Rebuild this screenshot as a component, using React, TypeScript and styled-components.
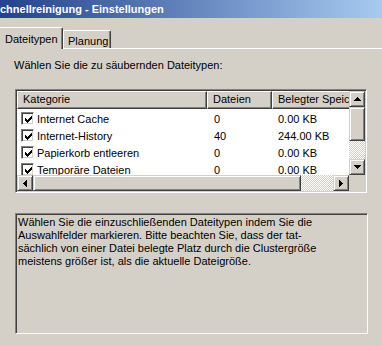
import styled, { createGlobalStyle } from 'styled-components';

const GlobalStyle = createGlobalStyle`
  html, body {
    margin: 0;
    padding: 0;
    background: #d4d0c8;
  }
  body {
    font-family: "Liberation Sans", Arial, sans-serif;
    font-size: 11px;
    color: #000;
  }
  * {
    box-sizing: border-box;
  }
`;

const Window = styled.div`
  width: 382px;
  height: 346px;
  overflow: hidden;
  display: flex;
  flex-direction: column;
  background: #d4d0c8;
`;

const TitleBar = styled.div`
  height: 18px;
  flex: none;
  background: linear-gradient(to right, #23418c, #a6caf0);
  color: #fff;
  font-weight: bold;
  font-size: 11px;
  line-height: 19px;
  white-space: nowrap;
`;

const TabStrip = styled.div`
  display: flex;
  align-items: flex-end;
  height: 21px;
  margin-top: 9px;
  margin-left: -1px;
  position: relative;
  z-index: 1;
  flex: none;
`;

const Tab = styled.div<{ $active?: boolean; $width: number }>`
  width: ${({ $width }) => $width}px;
  height: ${({ $active }) => ($active ? 22 : 18)}px;
  margin-bottom: ${({ $active }) => ($active ? -1 : 0)}px;
  padding: ${({ $active }) => ($active ? '0 0 0 5px' : '2px 0 0 4px')};
  display: flex;
  align-items: center;
  background: #d4d0c8;
  border-top: 1px solid #fff;
  border-left: 1px solid #fff;
  border-right: 1px solid #404040;
  border-radius: 2px 2px 0 0;
  box-shadow: inset -1px 0 #808080;
  white-space: nowrap;
`;

const Panel = styled.div`
  flex: 1;
  border-top: 1px solid #fff;
  padding: 10px 0 0 14px;
  display: flex;
  flex-direction: column;
`;

const Intro = styled.div`
  line-height: 13px;
  white-space: nowrap;
`;

const ListView = styled.div`
  margin: 17px 0 0 1px;
  width: 352px;
  height: 104px;
  border: 1px solid;
  border-color: #808080 #fff #fff #808080;
  box-shadow: inset 1px 1px #404040, inset -1px -1px #d4d0c8;
  padding: 1px;
  display: grid;
  grid-template-columns: 332px 16px;
  grid-template-rows: 84px 16px;
`;

const ListContent = styled.div`
  background: #fff;
  overflow: hidden;
`;

const HeaderRow = styled.div`
  display: flex;
  height: 18px;
`;

const HeaderCell = styled.div<{ $width: number }>`
  width: ${({ $width }) => $width}px;
  flex: none;
  height: 18px;
  padding-left: 5px;
  background: #d4d0c8;
  border-top: 1px solid #fff;
  border-left: 1px solid #fff;
  border-right: 1px solid #404040;
  border-bottom: 1px solid #404040;
  box-shadow: inset -1px -1px #808080;
  line-height: 15px;
  white-space: nowrap;
  overflow: hidden;
`;

const Rows = styled.div`
  padding-top: 1px;
`;

const Row = styled.div`
  display: flex;
  height: 17px;
  align-items: center;
`;

const Cell = styled.div<{ $width: number; $pad: number }>`
  width: ${({ $width }) => $width}px;
  flex: none;
  padding-left: ${({ $pad }) => $pad}px;
  display: flex;
  align-items: center;
  gap: 3px;
  white-space: nowrap;
`;

const CheckBox = styled.div`
  width: 13px;
  height: 13px;
  flex: none;
  background: #fff;
  border: 1px solid;
  border-color: #808080 #fff #fff #808080;
  box-shadow: inset 1px 1px #404040, inset -1px -1px #d4d0c8;
  padding: 3px 0 0 3px;
  display: flex;
`;

const VScroll = styled.div`
  display: flex;
  flex-direction: column;
`;

const HScroll = styled.div`
  display: flex;
`;

const Track = styled.div`
  flex: 1;
  background: repeating-conic-gradient(#d4d0c8 0 25%, #fff 0 50%) 0 0 / 2px 2px;
`;

const Raised = styled.div<{ $size?: number; $horizontal?: boolean }>`
  flex: none;
  width: ${({ $size, $horizontal }) => ($horizontal && $size ? `${$size}px` : '16px')};
  height: ${({ $size, $horizontal }) => (!$horizontal && $size ? `${$size}px` : '16px')};
  background: #d4d0c8;
  border: 1px solid;
  border-color: #d4d0c8 #404040 #404040 #d4d0c8;
  box-shadow: inset 1px 1px #fff, inset -1px -1px #808080;
  display: flex;
  align-items: center;
  justify-content: center;
`;

const Corner = styled.div`
  background: #d4d0c8;
`;

const Description = styled.div`
  margin: 20px 0 0 1px;
  width: 353px;
  height: 121px;
  border: 1px solid;
  border-color: #808080 #fff #fff #808080;
  box-shadow: inset 1px 1px #404040, inset -1px -1px #d4d0c8;
  padding: 2px 0 0 2px;
  line-height: 13px;
  white-space: nowrap;
`;

const Check = () => (
  <svg width="7" height="7" viewBox="0 0 7 7" shapeRendering="crispEdges">
    <path
      fill="#000"
      d="M0 2h1v3H0zM1 3h1v3H1zM2 4h1v3H2zM3 3h1v3H3zM4 2h1v3H4zM5 1h1v3H5zM6 0h1v3H6z"
    />
  </svg>
);

type Dir = 'up' | 'down' | 'left' | 'right';

const Arrow = ({ dir }: { dir: Dir }) => {
  const vertical = dir === 'up' || dir === 'down';
  const d = {
    up: 'M3 0h1v1H3zM2 1h3v1H2zM1 2h5v1H1zM0 3h7v1H0z',
    down: 'M0 0h7v1H0zM1 1h5v1H1zM2 2h3v1H2zM3 3h1v1H3z',
    left: 'M3 0h1v7H3zM2 1h1v5H2zM1 2h1v3H1zM0 3h1v1H0z',
    right: 'M0 0h1v7H0zM1 1h1v5H1zM2 2h1v3H2zM3 3h1v1H3z',
  }[dir];
  return (
    <svg
      width={vertical ? 7 : 4}
      height={vertical ? 4 : 7}
      viewBox={vertical ? '0 0 7 4' : '0 0 4 7'}
      shapeRendering="crispEdges"
    >
      <path fill="#000" d={d} />
    </svg>
  );
};

const items = [
  { name: 'Internet Cache', files: '0', size: '0.00 KB' },
  { name: 'Internet-History', files: '40', size: '244.00 KB' },
  { name: 'Papierkorb entleeren', files: '0', size: '0.00 KB' },
  { name: 'Temporäre Dateien', files: '0', size: '0.00 KB' },
];

const App = () => {
  return (
    <Window>
      <GlobalStyle />
      <TitleBar>chnellreinigung - Einstellungen</TitleBar>
      <TabStrip>
        <Tab $active $width={64}>
          Dateitypen
        </Tab>
        <Tab $width={48}>Planung</Tab>
      </TabStrip>
      <Panel>
        <Intro>Wählen Sie die zu säubernden Dateitypen:</Intro>
        <ListView>
          <ListContent>
            <HeaderRow>
              <HeaderCell $width={190}>Kategorie</HeaderCell>
              <HeaderCell $width={65}>Dateien</HeaderCell>
              <HeaderCell $width={120}>Belegter Speicher</HeaderCell>
            </HeaderRow>
            <Rows>
              {items.map((item) => (
                <Row key={item.name}>
                  <Cell $width={190} $pad={4}>
                    <CheckBox>
                      <Check />
                    </CheckBox>
                    {item.name}
                  </Cell>
                  <Cell $width={65} $pad={7}>
                    {item.files}
                  </Cell>
                  <Cell $width={80} $pad={6}>
                    {item.size}
                  </Cell>
                </Row>
              ))}
            </Rows>
          </ListContent>
          <VScroll>
            <Raised>
              <Arrow dir="up" />
            </Raised>
            <Raised $size={34} />
            <Track />
            <Raised>
              <Arrow dir="down" />
            </Raised>
          </VScroll>
          <HScroll>
            <Raised $horizontal>
              <Arrow dir="left" />
            </Raised>
            <Raised $horizontal $size={268} />
            <Track />
            <Raised $horizontal>
              <Arrow dir="right" />
            </Raised>
          </HScroll>
          <Corner />
        </ListView>
        <Description>
          Wählen Sie die einzuschließenden Dateitypen indem Sie die
          <br />
          Auswahlfelder markieren. Bitte beachten Sie, dass der tat-
          <br />
          sächlich von einer Datei belegte Platz durch die Clustergröße
          <br />
          meistens größer ist, als die aktuelle Dateigröße.
        </Description>
      </Panel>
    </Window>
  );
};

export default App;
